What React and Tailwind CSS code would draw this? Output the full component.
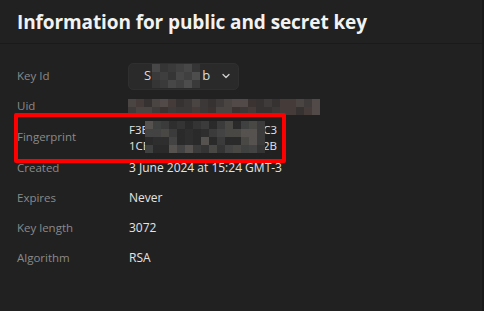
import React from "react";

function Mosaic({ cols, rows, size = 8, palette, seed = 1 }) {
  let s = seed;
  const rnd = () => {
    s = (s * 9301 + 49297) % 233280;
    return s / 233280;
  };
  const cells = [];
  for (let r = 0; r < rows; r++) {
    for (let c = 0; c < cols; c++) {
      cells.push(palette[Math.floor(rnd() * palette.length)]);
    }
  }
  return (
    <div
      className="grid"
      style={{ gridTemplateColumns: `repeat(${cols}, ${size}px)`, gridAutoRows: `${size}px` }}
    >
      {cells.map((c, i) => (
        <div key={i} style={{ background: c }} />
      ))}
    </div>
  );
}

const greyPal = ["#3a3a3a", "#404040", "#474747", "#353535", "#4d4d4d", "#3e3e3e"];
const uidPal = ["#3b3331", "#453c3a", "#4a4443", "#3d3838", "#524a49", "#403b3b", "#363232"];
const fpPal = ["#2e2e2e", "#343434", "#3b3b3b", "#434343", "#4a4845", "#555250", "#2a2a2a", "#3f4141"];

function Row({ label, children, h = "h-[30px]" }) {
  return (
    <div className={`flex items-center ${h}`}>
      <div className="w-[112px] shrink-0 text-[#8a8a8a] text-[11.5px]">{label}</div>
      <div className="text-[#e4e4e4] text-[12px]">{children}</div>
    </div>
  );
}

export default function App() {
  return (
    <div
      className="w-[484px] h-[311px] bg-[#212121] border-r-2 border-[#191919] overflow-hidden"
      style={{ fontFamily: '"Open Sans", "Noto Sans", sans-serif' }}
    >
      <div className="h-[44px] border-b border-[#1a1a1a] flex items-center pl-[17px] pt-[1px]">
        <h1 className="text-[19px] font-bold text-[#f2f2f2] tracking-[-0.1px]">
          Information for public and secret key
        </h1>
      </div>
      <div className="pl-[17px] pt-[17px]">
        <Row label="Key Id">
          <div className="h-[27px] w-[111px] rounded-[5px] bg-[#2a2a2a] border border-[#2f2f2f] flex items-center pl-[15px] gap-[1px] -ml-[1px]">
            <span className="text-[#dcdcdc] text-[13px]">S</span>
            <Mosaic cols={6} rows={3} size={8} palette={greyPal} seed={7} />
            <span className="text-[#dcdcdc] text-[13px] ml-[1px]">b</span>
            <svg width="12" height="12" viewBox="0 0 24 24" className="ml-[9px]" fill="none" stroke="#cfcfcf" strokeWidth="2.6" strokeLinecap="round" strokeLinejoin="round">
              <path d="M6 9l6 6 6-6" />
            </svg>
          </div>
        </Row>
        <Row label="Uid">
          <div className="-ml-[1px] pt-[1px]">
            <Mosaic cols={24} rows={2} size={8} palette={uidPal} seed={3} />
          </div>
        </Row>
        <div className="relative">
          <div className="absolute left-[-3px] top-[-8px] w-[272px] h-[50px] border-[4px] border-[#ff0000] rounded-[2px]" />
          <Row label="Fingerprint" h="h-[32px]">
            <div className="relative text-[11.5px] leading-[16px] font-medium w-[148px] pt-[2px]">
              <div className="flex justify-between"><span>F3B</span><span>C3</span></div>
              <div className="flex justify-between"><span>1CB</span><span>2B</span></div>
              <div className="absolute left-[16px] top-[1px]">
                <Mosaic cols={15} rows={4} size={8} palette={fpPal} seed={11} />
              </div>
            </div>
          </Row>
        </div>
        <Row label="Created">3 June 2024 at 15:24 GMT-3</Row>
        <Row label="Expires">Never</Row>
        <Row label="Key length">3072</Row>
        <Row label="Algorithm" h="h-[29px]">RSA</Row>
      </div>
    </div>
  );
}
